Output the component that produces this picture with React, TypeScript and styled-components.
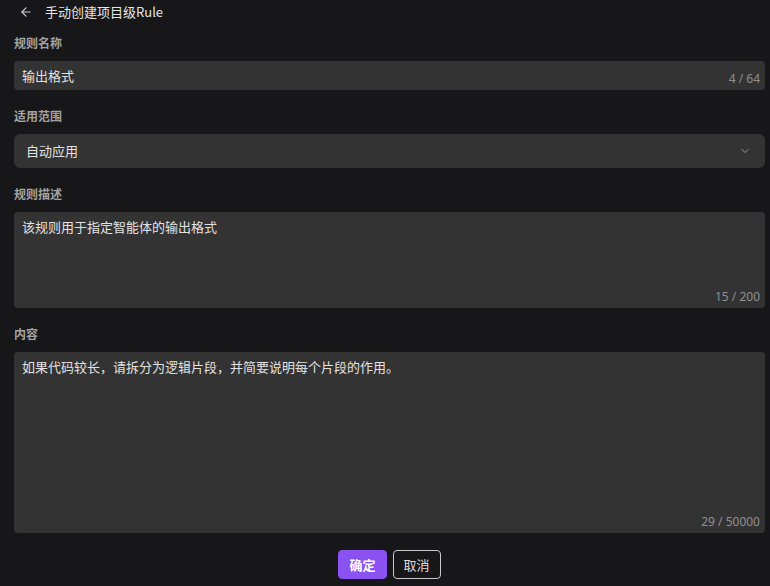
import { ArrowLeft, ChevronDown } from "lucide-react";
import styled, { createGlobalStyle } from "styled-components";

const GlobalStyle = createGlobalStyle`
  html, body {
    margin: 0;
    padding: 0;
    background: #17171a;
    font-family: "Noto Sans CJK SC", "Noto Sans", sans-serif;
  }
`;

function App() {
  return (
    <>
      <GlobalStyle />
      <Page>
        <Header>
          <BackButton>
            <ArrowLeft size={14} strokeWidth={2} />
          </BackButton>
          <Title>手动创建项目级Rule</Title>
        </Header>

        <Field>
          <Label>规则名称</Label>
          <InputBox>
            <Value>输出格式</Value>
            <Counter>4 / 64</Counter>
          </InputBox>
        </Field>

        <Field>
          <Label>适用范围</Label>
          <SelectBox>
            <Value>自动应用</Value>
            <ChevronDown size={12} color="#9a9a9a" />
          </SelectBox>
        </Field>

        <Field>
          <Label>规则描述</Label>
          <TextBox height={96}>
            <Value>该规则用于指定智能体的输出格式</Value>
            <Counter>15 / 200</Counter>
          </TextBox>
        </Field>

        <Field>
          <Label>内容</Label>
          <TextBox height={181}>
            <Value>如果代码较长，请拆分为逻辑片段，并简要说明每个片段的作用。</Value>
            <Counter>29 / 50000</Counter>
          </TextBox>
        </Field>

        <Actions>
          <Button primary>确定</Button>
          <Button>取消</Button>
        </Actions>
      </Page>
    </>
  );
}

export default App;

const Page = styled.div`
  display: flex;
  flex-direction: column;
  gap: 17px;
  padding: 2px 5px 0 14px;
  min-height: 586px;
  box-sizing: border-box;
  color: #e0e0e0;
`;

const Header = styled.div`
  display: flex;
  align-items: center;
  height: 20px;
  margin-bottom: -5px;
  padding-left: 5px;
  gap: 12px;
`;

const BackButton = styled.span`
  display: flex;
  align-items: center;
  color: #d0d0d0;
`;

const Title = styled.span`
  font-size: 13px;
  line-height: 20px;
  color: #e6e6e6;
`;

const Field = styled.div`
  display: flex;
  flex-direction: column;
  gap: 9px;
`;

const Label = styled.div`
  font-size: 12px;
  line-height: 18px;
  font-weight: 700;
  color: #a3a3a3;
`;

const InputBox = styled.div`
  position: relative;
  display: flex;
  align-items: center;
  height: 29px;
  padding: 0 8px;
  background: #333333;
  border-radius: 4px;
`;

const SelectBox = styled.div`
  display: flex;
  align-items: center;
  justify-content: space-between;
  height: 34px;
  padding: 0 14px 0 12px;
  background: #333333;
  border-radius: 6px;
`;

const TextBox = styled.div<{ height: number }>`
  position: relative;
  height: ${(p) => p.height}px;
  padding: 6px 8px;
  box-sizing: border-box;
  font-size: 13px;
  line-height: 18px;
  background: #333333;
  border-radius: 4px;
`;

const Value = styled.span`
  font-size: 13px;
  line-height: 18px;
  color: #e2e2e2;
`;

const Counter = styled.span`
  position: absolute;
  right: 5px;
  bottom: 3px;
  font-family: "Noto Sans", sans-serif;
  font-size: 12px;
  line-height: 16px;
  color: #8f8f8f;
`;

const Actions = styled.div`
  display: flex;
  justify-content: center;
  gap: 6px;
`;

const Button = styled.button<{ primary?: boolean }>`
  height: 29px;
  padding: 0 10px;
  border-radius: 4px;
  font-family: inherit;
  font-size: 13px;
  font-weight: ${(p) => (p.primary ? 700 : 400)};
  color: ${(p) => (p.primary ? "#ffffff" : "#dddddd")};
  background: ${(p) => (p.primary ? "#8a52f0" : "transparent")};
  border: 1px solid ${(p) => (p.primary ? "#8a52f0" : "#c8c8c8")};
`;
